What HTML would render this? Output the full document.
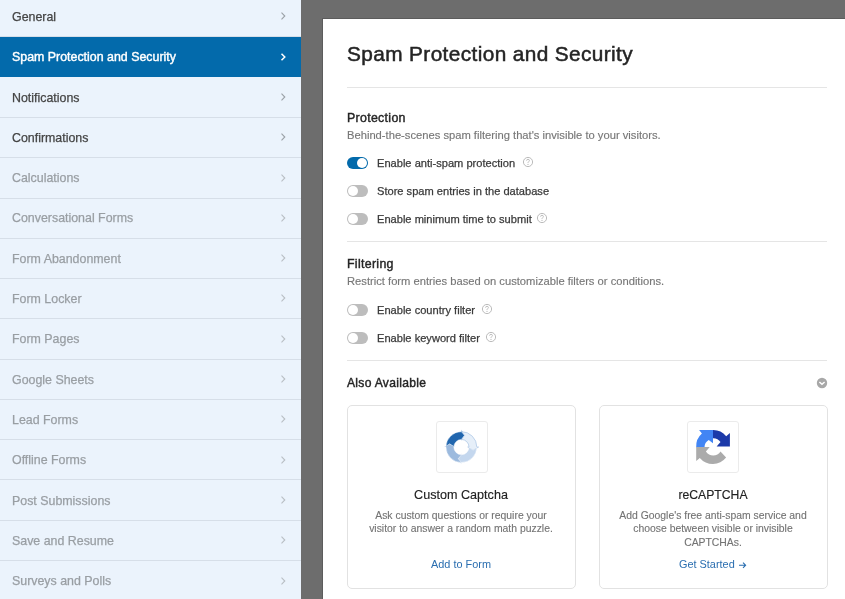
<!DOCTYPE html>
<html><head><meta charset="utf-8">
<style>
*{margin:0;padding:0;box-sizing:border-box}
html,body{width:845px;height:599px;overflow:hidden;background:#6d6d6d;font-family:"Liberation Sans",sans-serif}
#side{position:absolute;left:0;top:0;width:301px;height:599px;background:#ebf3fc}
#panel{position:absolute;left:323px;top:19px;width:600px;height:700px;background:#fff;box-shadow:0 0 0 1px rgba(0,0,0,.15)}
.t{position:absolute;white-space:nowrap;line-height:1;will-change:transform}
.ic{position:absolute;overflow:visible}
.hr{position:absolute;left:347px;width:480px;height:1px;background:#e5e5e5}
.tg{position:absolute;left:347px;width:21px;height:12px;border-radius:6px;background:#bdbdbd}
.tg::after{content:"";position:absolute;left:1px;top:1px;width:10px;height:10px;border-radius:50%;background:#fff}
.tg.on{background:#036aab}
.tg.on::after{left:10px}
.card{position:absolute;top:405px;width:229px;height:183.5px;border:1px solid #e2e2e2;border-radius:5px}
.ibox{position:absolute;width:52px;height:52px;border:1px solid #ebebeb;border-radius:3px}
</style></head><body>
<div id="side">
<div style="position:absolute;left:0;top:36.46px;width:301px;height:1px;background:#d6dee8"></div>
<div class="t" style="left:12.2px;top:10.90px;font-size:12.4px;color:#444444;font-weight:400;letter-spacing:0px;-webkit-text-stroke:0.25px #444444;">General</div>
<svg class="ic" style="left:279px;top:11.30px" width="8" height="10" viewBox="0 0 8 10"><path d="M2.5 1.7 L5.8 5.0 L2.5 8.3" fill="none" stroke="#9aa0a6" stroke-width="1.1"/></svg>
<div style="position:absolute;left:0;top:36.70px;width:301px;height:40.10px;background:#036aab"></div>
<div class="t" style="left:12.2px;top:51.20px;font-size:12.4px;color:#ffffff;font-weight:400;letter-spacing:0px;-webkit-text-stroke:0.4px #fff;">Spam Protection and Security</div>
<svg class="ic" style="left:279px;top:51.60px" width="8" height="10" viewBox="0 0 8 10"><path d="M2.5 1.7 L5.8 5.0 L2.5 8.3" fill="none" stroke="#ffffff" stroke-width="1.5"/></svg>
<div style="position:absolute;left:0;top:117.00px;width:301px;height:1px;background:#d6dee8"></div>
<div class="t" style="left:12.2px;top:91.50px;font-size:12.4px;color:#444444;font-weight:400;letter-spacing:0px;-webkit-text-stroke:0.25px #444444;">Notifications</div>
<svg class="ic" style="left:279px;top:91.90px" width="8" height="10" viewBox="0 0 8 10"><path d="M2.5 1.7 L5.8 5.0 L2.5 8.3" fill="none" stroke="#9aa0a6" stroke-width="1.1"/></svg>
<div style="position:absolute;left:0;top:157.27px;width:301px;height:1px;background:#d6dee8"></div>
<div class="t" style="left:12.2px;top:131.80px;font-size:12.4px;color:#444444;font-weight:400;letter-spacing:0px;-webkit-text-stroke:0.25px #444444;">Confirmations</div>
<svg class="ic" style="left:279px;top:132.20px" width="8" height="10" viewBox="0 0 8 10"><path d="M2.5 1.7 L5.8 5.0 L2.5 8.3" fill="none" stroke="#9aa0a6" stroke-width="1.1"/></svg>
<div style="position:absolute;left:0;top:197.54px;width:301px;height:1px;background:#d6dee8"></div>
<div class="t" style="left:12.2px;top:172.10px;font-size:12.4px;color:#999ea3;font-weight:400;letter-spacing:0px;-webkit-text-stroke:0.25px #999ea3;">Calculations</div>
<svg class="ic" style="left:279px;top:172.50px" width="8" height="10" viewBox="0 0 8 10"><path d="M2.5 1.7 L5.8 5.0 L2.5 8.3" fill="none" stroke="#b8bec4" stroke-width="1.1"/></svg>
<div style="position:absolute;left:0;top:237.81px;width:301px;height:1px;background:#d6dee8"></div>
<div class="t" style="left:12.2px;top:212.40px;font-size:12.4px;color:#999ea3;font-weight:400;letter-spacing:0px;-webkit-text-stroke:0.25px #999ea3;">Conversational Forms</div>
<svg class="ic" style="left:279px;top:212.80px" width="8" height="10" viewBox="0 0 8 10"><path d="M2.5 1.7 L5.8 5.0 L2.5 8.3" fill="none" stroke="#b8bec4" stroke-width="1.1"/></svg>
<div style="position:absolute;left:0;top:278.08px;width:301px;height:1px;background:#d6dee8"></div>
<div class="t" style="left:12.2px;top:252.70px;font-size:12.4px;color:#999ea3;font-weight:400;letter-spacing:0px;-webkit-text-stroke:0.25px #999ea3;">Form Abandonment</div>
<svg class="ic" style="left:279px;top:253.10px" width="8" height="10" viewBox="0 0 8 10"><path d="M2.5 1.7 L5.8 5.0 L2.5 8.3" fill="none" stroke="#b8bec4" stroke-width="1.1"/></svg>
<div style="position:absolute;left:0;top:318.35px;width:301px;height:1px;background:#d6dee8"></div>
<div class="t" style="left:12.2px;top:293.00px;font-size:12.4px;color:#999ea3;font-weight:400;letter-spacing:0px;-webkit-text-stroke:0.25px #999ea3;">Form Locker</div>
<svg class="ic" style="left:279px;top:293.40px" width="8" height="10" viewBox="0 0 8 10"><path d="M2.5 1.7 L5.8 5.0 L2.5 8.3" fill="none" stroke="#b8bec4" stroke-width="1.1"/></svg>
<div style="position:absolute;left:0;top:358.62px;width:301px;height:1px;background:#d6dee8"></div>
<div class="t" style="left:12.2px;top:333.30px;font-size:12.4px;color:#999ea3;font-weight:400;letter-spacing:0px;-webkit-text-stroke:0.25px #999ea3;">Form Pages</div>
<svg class="ic" style="left:279px;top:333.70px" width="8" height="10" viewBox="0 0 8 10"><path d="M2.5 1.7 L5.8 5.0 L2.5 8.3" fill="none" stroke="#b8bec4" stroke-width="1.1"/></svg>
<div style="position:absolute;left:0;top:398.89px;width:301px;height:1px;background:#d6dee8"></div>
<div class="t" style="left:12.2px;top:373.60px;font-size:12.4px;color:#999ea3;font-weight:400;letter-spacing:0px;-webkit-text-stroke:0.25px #999ea3;">Google Sheets</div>
<svg class="ic" style="left:279px;top:374.00px" width="8" height="10" viewBox="0 0 8 10"><path d="M2.5 1.7 L5.8 5.0 L2.5 8.3" fill="none" stroke="#b8bec4" stroke-width="1.1"/></svg>
<div style="position:absolute;left:0;top:439.16px;width:301px;height:1px;background:#d6dee8"></div>
<div class="t" style="left:12.2px;top:413.90px;font-size:12.4px;color:#999ea3;font-weight:400;letter-spacing:0px;-webkit-text-stroke:0.25px #999ea3;">Lead Forms</div>
<svg class="ic" style="left:279px;top:414.30px" width="8" height="10" viewBox="0 0 8 10"><path d="M2.5 1.7 L5.8 5.0 L2.5 8.3" fill="none" stroke="#b8bec4" stroke-width="1.1"/></svg>
<div style="position:absolute;left:0;top:479.43px;width:301px;height:1px;background:#d6dee8"></div>
<div class="t" style="left:12.2px;top:454.20px;font-size:12.4px;color:#999ea3;font-weight:400;letter-spacing:0px;-webkit-text-stroke:0.25px #999ea3;">Offline Forms</div>
<svg class="ic" style="left:279px;top:454.60px" width="8" height="10" viewBox="0 0 8 10"><path d="M2.5 1.7 L5.8 5.0 L2.5 8.3" fill="none" stroke="#b8bec4" stroke-width="1.1"/></svg>
<div style="position:absolute;left:0;top:519.70px;width:301px;height:1px;background:#d6dee8"></div>
<div class="t" style="left:12.2px;top:494.50px;font-size:12.4px;color:#999ea3;font-weight:400;letter-spacing:0px;-webkit-text-stroke:0.25px #999ea3;">Post Submissions</div>
<svg class="ic" style="left:279px;top:494.90px" width="8" height="10" viewBox="0 0 8 10"><path d="M2.5 1.7 L5.8 5.0 L2.5 8.3" fill="none" stroke="#b8bec4" stroke-width="1.1"/></svg>
<div style="position:absolute;left:0;top:559.97px;width:301px;height:1px;background:#d6dee8"></div>
<div class="t" style="left:12.2px;top:534.80px;font-size:12.4px;color:#999ea3;font-weight:400;letter-spacing:0px;-webkit-text-stroke:0.25px #999ea3;">Save and Resume</div>
<svg class="ic" style="left:279px;top:535.20px" width="8" height="10" viewBox="0 0 8 10"><path d="M2.5 1.7 L5.8 5.0 L2.5 8.3" fill="none" stroke="#b8bec4" stroke-width="1.1"/></svg>
<div style="position:absolute;left:0;top:600.24px;width:301px;height:1px;background:#d6dee8"></div>
<div class="t" style="left:12.2px;top:575.10px;font-size:12.4px;color:#999ea3;font-weight:400;letter-spacing:0px;-webkit-text-stroke:0.25px #999ea3;">Surveys and Polls</div>
<svg class="ic" style="left:279px;top:575.50px" width="8" height="10" viewBox="0 0 8 10"><path d="M2.5 1.7 L5.8 5.0 L2.5 8.3" fill="none" stroke="#b8bec4" stroke-width="1.1"/></svg>
</div>
<div id="panel"></div>
<div class="t" style="left:346.5px;top:44.19px;font-size:20.8px;color:#242424;font-weight:400;letter-spacing:0.39px;-webkit-text-stroke:0.5px #242424;">Spam Protection and Security</div>
<div class="hr" style="top:87px"></div>
<div class="t" style="left:346.5px;top:111.90px;font-size:12.4px;color:#242424;font-weight:400;letter-spacing:0.3px;-webkit-text-stroke:0.4px #242424;">Protection</div>
<div class="t" style="left:346.5px;top:129.52px;font-size:11.2px;color:#777777;font-weight:400;letter-spacing:0px;-webkit-text-stroke:0.15px #777777;">Behind-the-scenes spam filtering that's invisible to your visitors.</div>
<div class="tg on" style="top:157.00px"></div>
<div class="t" style="left:376.5px;top:158.20px;font-size:11.1px;color:#3a3a3a;font-weight:400;letter-spacing:0px;-webkit-text-stroke:0.25px #3a3a3a;">Enable anti-spam protection</div>
<svg class="ic" style="left:521.70px;top:155.90px" width="12" height="12" viewBox="0 0 12 12"><circle cx="6" cy="6" r="4.6" fill="none" stroke="#bcbcbc" stroke-width="1"/><path d="M4.6 4.7 Q4.6 3.3 6 3.3 Q7.4 3.3 7.4 4.6 Q7.4 5.4 6.5 5.8 Q6 6.1 6 6.9" fill="none" stroke="#bcbcbc" stroke-width="0.95"/><circle cx="6" cy="8.4" r="0.6" fill="#bcbcbc"/></svg>
<div class="tg" style="top:185.00px"></div>
<div class="t" style="left:376.5px;top:186.20px;font-size:11.1px;color:#3a3a3a;font-weight:400;letter-spacing:0px;-webkit-text-stroke:0.25px #3a3a3a;">Store spam entries in the database</div>
<div class="tg" style="top:213.00px"></div>
<div class="t" style="left:376.5px;top:214.20px;font-size:11.1px;color:#3a3a3a;font-weight:400;letter-spacing:0px;-webkit-text-stroke:0.25px #3a3a3a;">Enable minimum time to submit</div>
<svg class="ic" style="left:536.20px;top:211.90px" width="12" height="12" viewBox="0 0 12 12"><circle cx="6" cy="6" r="4.6" fill="none" stroke="#bcbcbc" stroke-width="1"/><path d="M4.6 4.7 Q4.6 3.3 6 3.3 Q7.4 3.3 7.4 4.6 Q7.4 5.4 6.5 5.8 Q6 6.1 6 6.9" fill="none" stroke="#bcbcbc" stroke-width="0.95"/><circle cx="6" cy="8.4" r="0.6" fill="#bcbcbc"/></svg>
<div class="hr" style="top:241px"></div>
<div class="t" style="left:346.5px;top:258.40px;font-size:12.4px;color:#242424;font-weight:400;letter-spacing:0.3px;-webkit-text-stroke:0.4px #242424;">Filtering</div>
<div class="t" style="left:346.5px;top:276.02px;font-size:11.2px;color:#777777;font-weight:400;letter-spacing:0px;-webkit-text-stroke:0.15px #777777;">Restrict form entries based on customizable filters or conditions.</div>
<div class="tg" style="top:304.00px"></div>
<div class="t" style="left:376.5px;top:305.20px;font-size:11.1px;color:#3a3a3a;font-weight:400;letter-spacing:0px;-webkit-text-stroke:0.25px #3a3a3a;">Enable country filter</div>
<svg class="ic" style="left:481.30px;top:302.90px" width="12" height="12" viewBox="0 0 12 12"><circle cx="6" cy="6" r="4.6" fill="none" stroke="#bcbcbc" stroke-width="1"/><path d="M4.6 4.7 Q4.6 3.3 6 3.3 Q7.4 3.3 7.4 4.6 Q7.4 5.4 6.5 5.8 Q6 6.1 6 6.9" fill="none" stroke="#bcbcbc" stroke-width="0.95"/><circle cx="6" cy="8.4" r="0.6" fill="#bcbcbc"/></svg>
<div class="tg" style="top:332.00px"></div>
<div class="t" style="left:376.5px;top:333.20px;font-size:11.1px;color:#3a3a3a;font-weight:400;letter-spacing:0px;-webkit-text-stroke:0.25px #3a3a3a;">Enable keyword filter</div>
<svg class="ic" style="left:484.70px;top:330.90px" width="12" height="12" viewBox="0 0 12 12"><circle cx="6" cy="6" r="4.6" fill="none" stroke="#bcbcbc" stroke-width="1"/><path d="M4.6 4.7 Q4.6 3.3 6 3.3 Q7.4 3.3 7.4 4.6 Q7.4 5.4 6.5 5.8 Q6 6.1 6 6.9" fill="none" stroke="#bcbcbc" stroke-width="0.95"/><circle cx="6" cy="8.4" r="0.6" fill="#bcbcbc"/></svg>
<div class="hr" style="top:359.5px"></div>
<div class="t" style="left:346.5px;top:377.06px;font-size:12.1px;color:#242424;font-weight:400;letter-spacing:0.3px;-webkit-text-stroke:0.4px #242424;">Also Available</div>
<svg class="ic" style="left:816px;top:376.9px" width="12" height="12" viewBox="0 0 12 12"><circle cx="6" cy="6" r="5.2" fill="#a8a8a8"/><path d="M3.4 4.9 L6 7.3 L8.6 4.9" fill="none" stroke="#fff" stroke-width="1.4"/></svg>
<div class="card" style="left:346.5px"></div>
<div class="ibox" style="left:436px;top:421px"></div>
<div class="t" style="left:311.0px;width:300px;text-align:center;top:488.93px;font-size:12.6px;color:#222222;font-weight:400;letter-spacing:0px;-webkit-text-stroke:0.15px #222;">Custom Captcha</div>
<div class="t" style="left:311.0px;width:300px;text-align:center;top:510.80px;font-size:10.4px;color:#737373;font-weight:400;letter-spacing:0px;-webkit-text-stroke:0.12px #737373;">Ask custom questions or require your</div>
<div class="t" style="left:311.0px;width:300px;text-align:center;top:524.40px;font-size:10.4px;color:#737373;font-weight:400;letter-spacing:0px;-webkit-text-stroke:0.12px #737373;">visitor to answer a random math puzzle.</div>
<div class="t" style="left:311.0px;width:300px;text-align:center;top:559.37px;font-size:10.9px;color:#2a6eb0;font-weight:400;letter-spacing:0px;">Add to Form</div>
<div class="card" style="left:598.5px"></div>
<div class="ibox" style="left:687px;top:421px"></div>
<div class="t" style="left:563.0px;width:300px;text-align:center;top:489.27px;font-size:12.2px;color:#222222;font-weight:400;letter-spacing:0px;-webkit-text-stroke:0.15px #222;">reCAPTCHA</div>
<div class="t" style="left:563.0px;width:300px;text-align:center;top:510.80px;font-size:10.4px;color:#737373;font-weight:400;letter-spacing:0px;-webkit-text-stroke:0.12px #737373;">Add Google's free anti-spam service and</div>
<div class="t" style="left:563.0px;width:300px;text-align:center;top:524.40px;font-size:10.4px;color:#737373;font-weight:400;letter-spacing:0px;-webkit-text-stroke:0.12px #737373;">choose between visible or invisible</div>
<div class="t" style="left:563.0px;width:300px;text-align:center;top:538.00px;font-size:10.4px;color:#737373;font-weight:400;letter-spacing:0px;-webkit-text-stroke:0.12px #737373;">CAPTCHAs.</div>
<div class="t" style="left:678.5px;top:559.37px;font-size:10.9px;color:#2a6eb0;font-weight:400;letter-spacing:0px;">Get Started</div>
<svg class="ic" style="left:737px;top:559.5px" width="11" height="10" viewBox="0 0 11 10"><path d="M2 5.2 H8.6 M6 2.6 L8.6 5.2 L6 7.8" fill="none" stroke="#2a6eb0" stroke-width="1.1"/></svg>
<svg style="position:absolute;left:0;top:0" width="845" height="599" viewBox="0 0 845 599">
<path d="M446.00 447.05 A15.4 15.4 0 0 1 461.40 431.65 L461.40 429.85 L464.53 435.36 L461.40 440.75 L461.40 439.45 A7.6 7.6 0 0 0 453.80 447.05 L449.71 443.92 Z" fill="#2166ae" stroke="#ffffff" stroke-width="0.4" stroke-linejoin="round"/>
<path d="M461.40 431.65 A15.4 15.4 0 0 1 476.80 447.05 L478.60 447.05 L473.09 450.18 L467.70 447.05 L469.00 447.05 A7.6 7.6 0 0 0 461.40 439.45 L464.53 435.36 Z" fill="#e6eff9" stroke="#a9c4e4" stroke-width="0.7" stroke-linejoin="round"/>
<path d="M476.80 447.05 A15.4 15.4 0 0 1 461.40 462.45 L461.40 464.25 L458.27 458.74 L461.40 453.35 L461.40 454.65 A7.6 7.6 0 0 0 469.00 447.05 L473.09 450.18 Z" fill="#c4d7ee" stroke="#ffffff" stroke-width="0.4" stroke-linejoin="round"/>
<path d="M461.40 462.45 A15.4 15.4 0 0 1 446.00 447.05 L444.20 447.05 L449.71 443.92 L455.10 447.05 L453.80 447.05 A7.6 7.6 0 0 0 461.40 454.65 L458.27 458.74 Z" fill="#9cbade" stroke="#ffffff" stroke-width="0.4" stroke-linejoin="round"/>
<path d="M696.2 447.2 A16.9 16.9 0 0 1 701.9 433.4 L699.1 429.9 L713 429.9 L713 443.2 L708.7 439.9 A8.6 8.6 0 0 0 704.5 447.2 Z" fill="#4285f4"/>
<path d="M713 430.1 A16.9 16.9 0 0 1 726.2 436.2 L729.9 433.1 L729.9 446.5 L716.6 446.5 L720.5 442.1 A8.6 8.6 0 0 0 713 438.3 Z" fill="#1c3aa9"/>
<path d="M720.5 451.4 L726.1 457.5 A16.9 16.9 0 0 1 699.8 457.9 L696.2 461.1 L696.2 447.1 L709.7 447.1 L705.9 451.6 A8.6 8.6 0 0 0 720.5 451.4 Z" fill="#ababab"/>
</svg>
</body></html>
